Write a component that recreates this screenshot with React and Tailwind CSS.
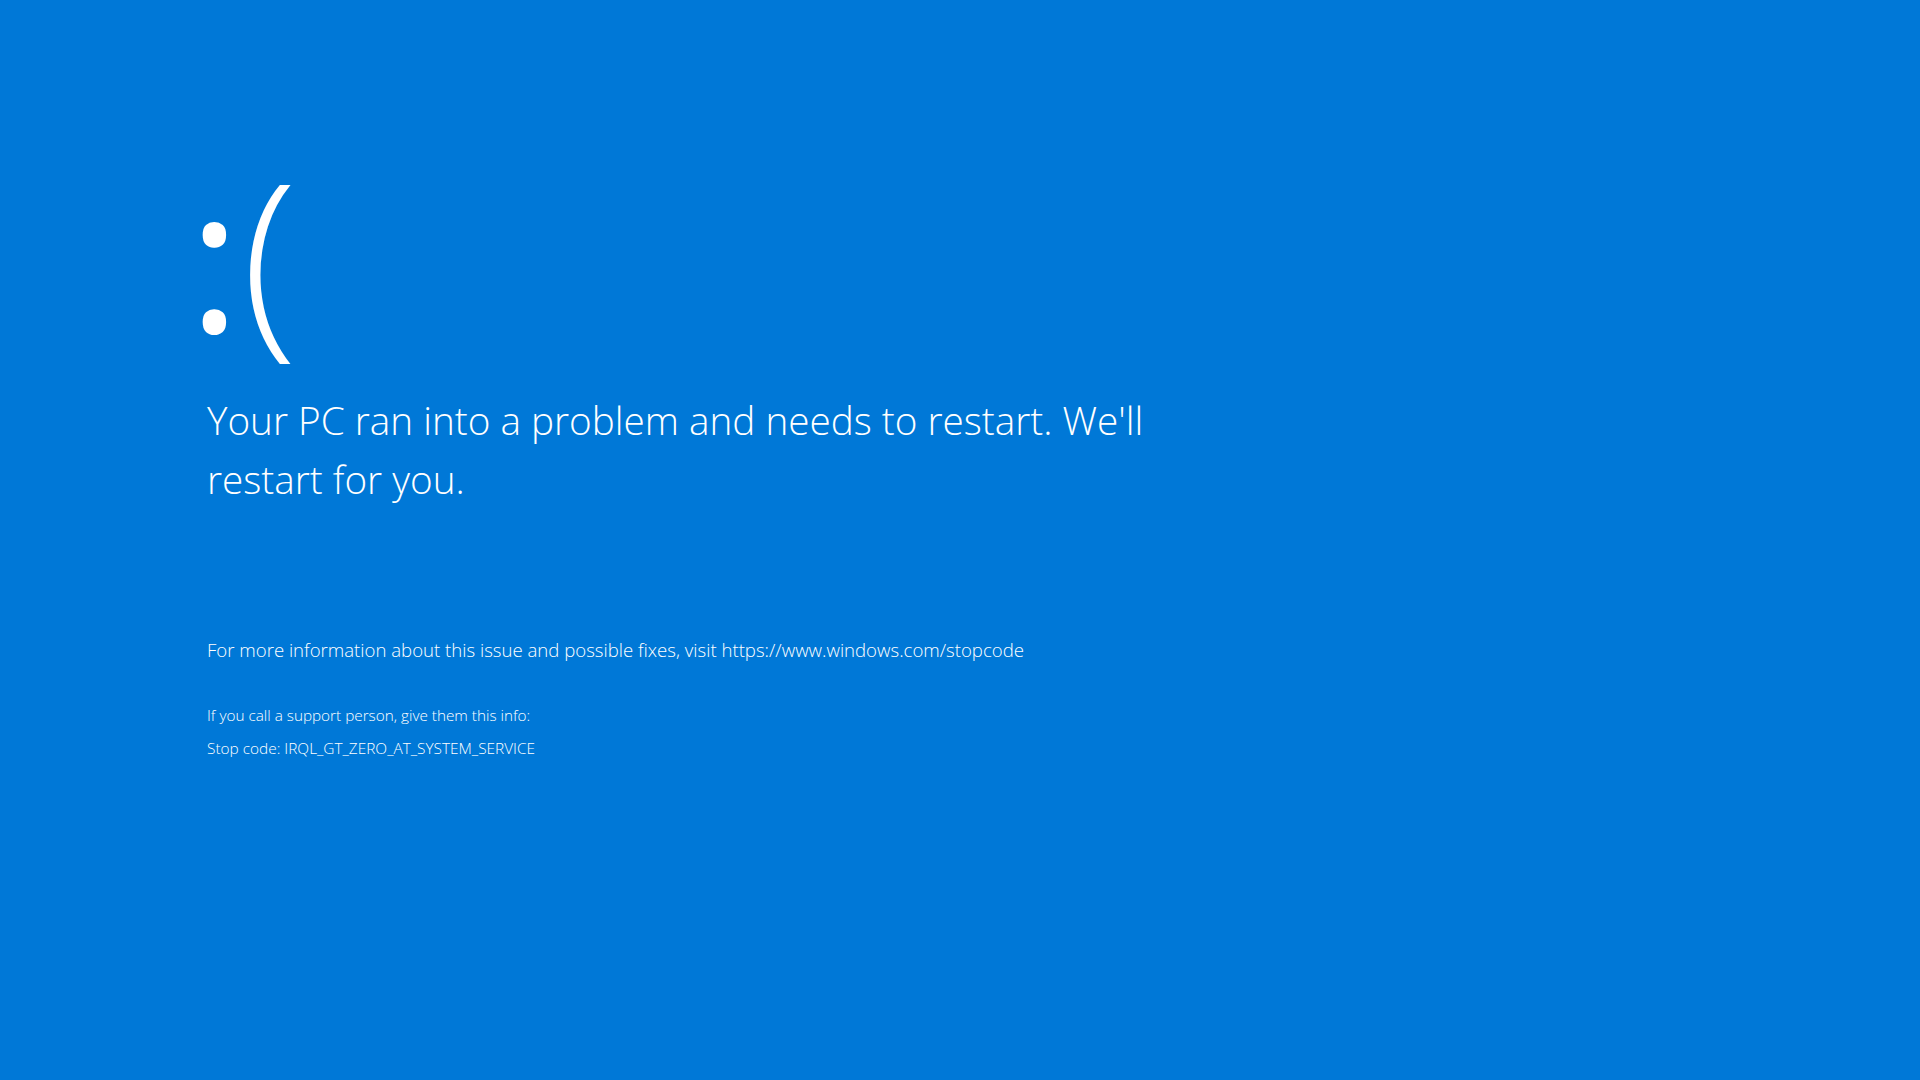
export default function App() {
  return (
    <div className="w-[1920px] h-[1080px] bg-[#0078d7] text-white overflow-hidden font-['Open_Sans',sans-serif]">
      <div className="pl-[207px] pt-[151px] flex flex-col items-start">
        <div className="h-[204px] text-[204px] leading-none font-light whitespace-nowrap">
          <span className="text-[201px] font-normal ml-[-19px]">:</span>
          <span className="ml-[1px]">(</span>
        </div>
        <div className="mt-[36px] w-[1010px] text-[38.7px] leading-[59px] font-light">
          Your PC ran into a problem and needs to restart. We'll restart for you.
        </div>
        <div className="mt-[127px] text-[18.6px] leading-[28px] font-light">
          For more information about this issue and possible fixes, visit https://www.windows.com/stopcode
        </div>
        <div className="mt-[41px] text-[15.3px] leading-[20px] font-light">
          If you call a support person, give them this info:
        </div>
        <div className="mt-[14px] text-[15.4px] leading-[20px] font-light">
          Stop code: IRQL_GT_ZERO_AT_SYSTEM_SERVICE
        </div>
      </div>
    </div>
  );
}
